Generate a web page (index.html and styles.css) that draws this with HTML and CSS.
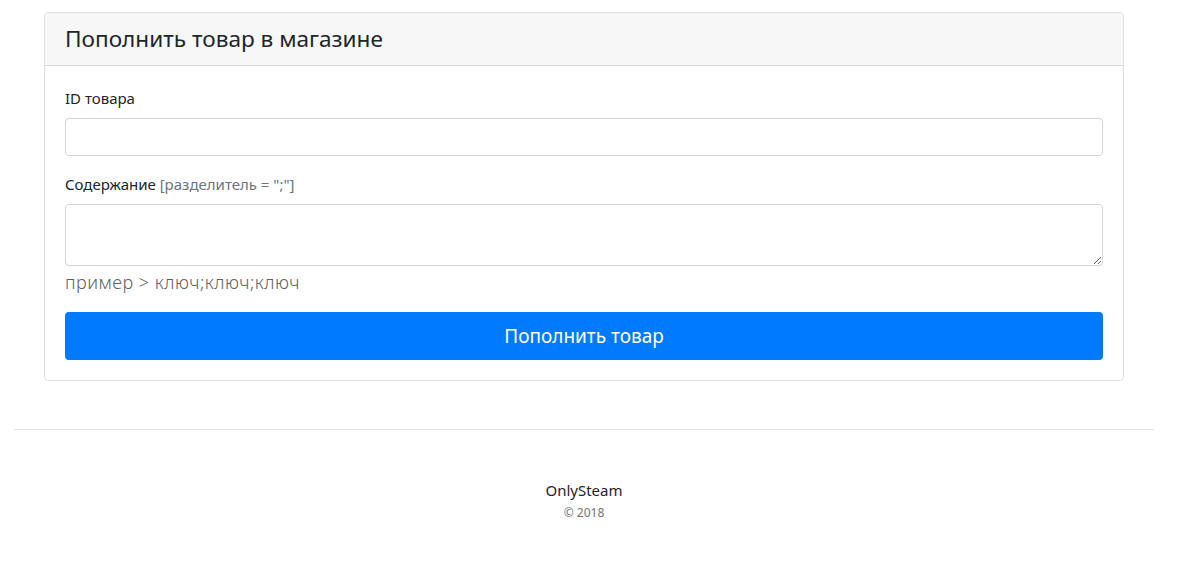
FILE: index.html
```html
<!DOCTYPE html>
<html lang="ru">
<head>
<meta charset="utf-8">
<title>Пополнить товар</title>
<link rel="stylesheet" href="styles.css">
</head>
<body>
<div class="container">
  <div class="card">
    <div class="card-header"><h4 class="card-title">Пополнить товар в магазине</h4></div>
    <div class="card-body">
      <div class="form-group">
        <label class="label">ID товара</label>
        <input class="input" type="text">
      </div>
      <div class="form-group">
        <label class="label">Содержание <span class="muted">[разделитель = ";"]</span></label>
        <textarea class="input textarea"></textarea>
        <div class="hint">пример &gt; ключ;ключ;ключ</div>
      </div>
      <button class="btn">Пополнить товар</button>
    </div>
  </div>
  <hr class="divider">
  <footer class="footer">
    <div class="brand">OnlySteam</div>
    <div class="copy">© 2018</div>
  </footer>
</div>
</body>
</html>
```
FILE: styles.css
```css
* { box-sizing: border-box; }
html, body { margin: 0; padding: 0; background: #fff; }
body {
  font-family: "Noto Sans", "Open Sans", sans-serif;
  font-size: 16px;
  line-height: 1.5;
  color: #212529;
}
.container {
  width: 1140px;
  margin-left: 14px;
}
.card {
  margin: 12px 30px 0;
  border: 1px solid rgba(0,0,0,.125);
  border-radius: 4px;
  overflow: hidden;
}
.card-header {
  background: #f7f7f7;
  border-bottom: 1px solid rgba(0,0,0,.125);
  padding: 12px 20px;
}
.card-title {
  margin: 0;
  font-size: 22.6px;
  font-weight: 400;
  line-height: 28px;
}
.card-body { padding: 20px; }
.form-group { margin-bottom: 16px; }
.label {
  display: block;
  margin-bottom: 8px;
  font-size: 15px;
  line-height: 24px;
}
.muted { color: #6c757d; }
.input {
  display: block;
  width: 100%;
  height: 38px;
  border: 1px solid #ced4da;
  border-radius: 4px;
  padding: 6px 12px;
  font: inherit;
  background: #fff;
}
.textarea {
  height: 62px;
  resize: vertical;
}
.hint {
  margin-top: 3px;
  font-size: 18px;
  line-height: 27px;
  letter-spacing: 0.5px;
  font-weight: 300;
  color: #5a6168;
}
.btn {
  display: block;
  width: 100%;
  height: 48px;
  border: 0;
  border-radius: 4px;
  background: #007bff;
  color: #fff;
  font-family: inherit;
  font-size: 19px;
  cursor: pointer;
}
.divider {
  margin: 48px 0 0;
  border: 0;
  border-top: 1px solid rgba(0,0,0,.1);
}
.footer {
  text-align: center;
  padding-top: 48px;
}
.brand { font-size: 15px; line-height: 24px; }
.copy { font-size: 12px; line-height: 20px; margin-top: 1px; color: #6c757d; }
```
